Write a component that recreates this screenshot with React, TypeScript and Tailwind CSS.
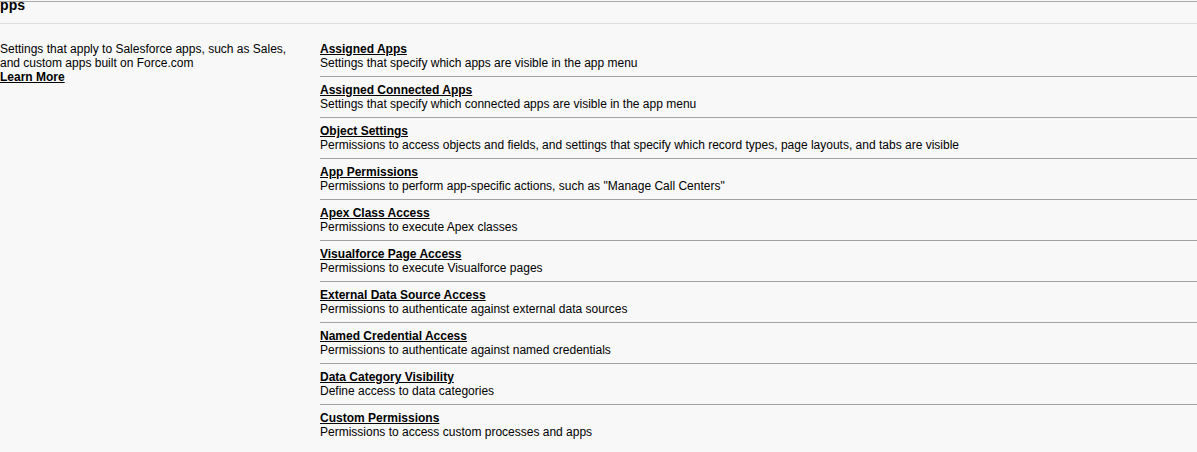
import React from 'react';

// ── 권한 항목 ─────────────────────────────────────────────
const items: { title: string; desc: string }[] = [
  { title: 'Assigned Apps', desc: 'Settings that specify which apps are visible in the app menu' },
  { title: 'Assigned Connected Apps', desc: 'Settings that specify which connected apps are visible in the app menu' },
  { title: 'Object Settings', desc: 'Permissions to access objects and fields, and settings that specify which record types, page layouts, and tabs are visible' },
  { title: 'App Permissions', desc: 'Permissions to perform app-specific actions, such as "Manage Call Centers"' },
  { title: 'Apex Class Access', desc: 'Permissions to execute Apex classes' },
  { title: 'Visualforce Page Access', desc: 'Permissions to execute Visualforce pages' },
  { title: 'External Data Source Access', desc: 'Permissions to authenticate against external data sources' },
  { title: 'Named Credential Access', desc: 'Permissions to authenticate against named credentials' },
  { title: 'Data Category Visibility', desc: 'Define access to data categories' },
  { title: 'Custom Permissions', desc: 'Permissions to access custom processes and apps' },
];

const App: React.FC = () => {
  return (
    <div
      className="w-[1197px] h-[452px] overflow-hidden bg-[#f8f8f8] text-black text-[12px] leading-[14px]"
      style={{ fontFamily: '"Liberation Sans", Arial, sans-serif' }}
    >
      {/* 헤더 */}
      <div className="h-[23px] mt-[1px] border-t border-b border-t-[#a8a8a8] border-b-[#dedede] overflow-hidden">
        <h2 className="-ml-[10px] -mt-[5px] text-[14px] leading-[16px] font-bold">Apps</h2>
      </div>

      {/* 본문 */}
      <div className="flex pt-[18px]">
        <div className="w-[320px] shrink-0 pr-[30px]">
          <p>Settings that apply to Salesforce apps, such as Sales, and custom apps built on Force.com</p>
          <a href="#" className="font-bold underline">Learn More</a>
        </div>

        <div className="flex-1">
          {items.map((it, i) => (
            <div
              key={it.title}
              className={`pb-[6px] ${i > 0 ? 'pt-[6px]' : ''} ${i < items.length - 1 ? 'border-b border-[#a3a3a3]' : ''}`}
            >
              <a href="#" className="block font-bold underline w-fit">{it.title}</a>
              <div>{it.desc}</div>
            </div>
          ))}
        </div>
      </div>
    </div>
  );
};

export default App;
